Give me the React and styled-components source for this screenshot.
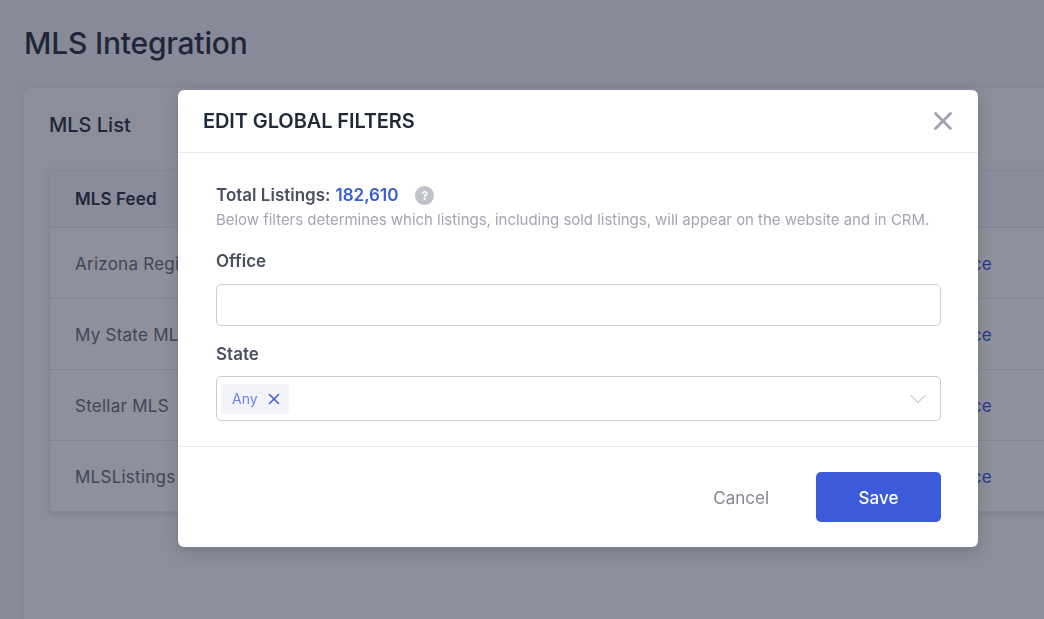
import React from 'react';
import styled, { createGlobalStyle } from 'styled-components';
import { X, ChevronDown } from 'lucide-react';

const GlobalStyle = createGlobalStyle`
	html, body {
		margin: 0;
		height: 100%;
		overflow: hidden;
		background: #f4f5f8;
		font-family: Inter, 'Liberation Sans', sans-serif;
	}
	* {
		box-sizing: border-box;
	}
`;

const Page = styled.div`
	height: 619px;
	padding: 24px 0 0 24px;
	overflow: hidden;
`;

const PageTitle = styled.h1`
	margin: 0;
	height: 40px;
	font-size: 30px;
	line-height: 38px;
	font-weight: 500;
	letter-spacing: -0.2px;
	color: #2b3446;
`;

const Card = styled.section`
	margin-top: 24px;
	width: 1100px;
	height: 560px;
	padding: 0 0 0 25px;
	background: #fbfbfd;
	border-radius: 6px;
	box-shadow: 0 0 6px rgba(30, 35, 60, 0.08);
`;

const CardTitle = styled.h2`
	margin: 0;
	height: 82px;
	font-size: 20px;
	line-height: 74px;
	font-weight: 500;
	color: #2b3446;
`;

const Table = styled.div`
	width: 1100px;
	background: #ffffff;
	border: 1px solid #edeef2;
	box-shadow: 0 2px 6px rgba(30, 35, 60, 0.12);
`;

const HeaderRow = styled.div`
	height: 56px;
	padding-left: 25px;
	display: flex;
	align-items: center;
	font-size: 17px;
	font-weight: 600;
	letter-spacing: 0.1px;
	color: #2b3446;
	background: #f8f9fb;
`;

const Row = styled.div`
	height: 71px;
	padding: 1px 156px 0 25px;
	display: flex;
	align-items: center;
	justify-content: space-between;
	font-size: 17px;
	letter-spacing: 0.25px;
	color: #6b7280;
	border-top: 1px solid #e8e9ee;
`;

const RowLink = styled.a`
	color: #3b5bdb;
`;

const Overlay = styled.div`
	position: fixed;
	inset: 0;
	padding: 90px 0 0 178px;
	background: rgba(18, 22, 45, 0.48);
`;

const Modal = styled.div`
	width: 800px;
	height: 457px;
	display: flex;
	flex-direction: column;
	background: #ffffff;
	border-radius: 6px;
	box-shadow: 0 4px 14px rgba(20, 24, 45, 0.2);
`;

const ModalHeader = styled.header`
	height: 63px;
	flex: none;
	padding: 0 25px;
	display: flex;
	align-items: center;
	justify-content: space-between;
	border-bottom: 1px solid #e9eaee;
`;

const ModalTitle = styled.h3`
	margin: 0;
	font-size: 20px;
	font-weight: 600;
	letter-spacing: -0.1px;
	color: #1f2937;
`;

const CloseButton = styled.button`
	width: 30px;
	height: 30px;
	margin-right: -5px;
	padding: 0;
	display: flex;
	align-items: center;
	justify-content: center;
	border: 0;
	background: none;
	color: #a0a2ad;
`;

const ModalBody = styled.div`
	flex: 1;
	padding: 31px 37px 0 38px;
`;

const TotalLine = styled.div`
	height: 22px;
	display: flex;
	align-items: center;
	font-size: 17px;
	font-weight: 600;
	color: #4b5060;
`;

const TotalValue = styled.span`
	margin-left: 5px;
	color: #3b5bdb;
`;

const HelpBadge = styled.span`
	width: 19px;
	height: 19px;
	margin-left: 17px;
	border-radius: 50%;
	display: flex;
	align-items: center;
	justify-content: center;
	font-size: 12px;
	font-weight: 700;
	color: #ffffff;
	background: #c0c2cc;
`;

const Hint = styled.p`
	margin: 4px 0 0;
	font-size: 15px;
	line-height: 20px;
	letter-spacing: -0.03px;
	color: #a3a5b1;
`;

const FieldLabel = styled.label`
	display: block;
	margin: ${(props) => props.$top}px 0 0;
	height: 24px;
	font-size: 17px;
	line-height: 24px;
	font-weight: 600;
	color: #4b5060;
`;

const TextInput = styled.input`
	display: block;
	width: 100%;
	height: 42px;
	margin-top: 11px;
	border: 1px solid #cdced6;
	border-radius: 5px;
	outline: none;
	background: #ffffff;
`;

const SelectBox = styled.div`
	height: 45px;
	margin-top: 10px;
	padding: 0 8px 0 4px;
	display: flex;
	align-items: center;
	justify-content: space-between;
	border: 1px solid #cdced6;
	border-radius: 5px;
`;

const Tag = styled.span`
	height: 30px;
	padding: 0 6px 0 11px;
	display: flex;
	align-items: center;
	gap: 7px;
	font-size: 14px;
	color: #6d84e3;
	background: #f3f4fa;
	border-radius: 3px;
`;

const TagIcon = styled(X)`
	color: #3b5bdb;
`;

const Chevron = styled(ChevronDown)`
	color: #cfd0d8;
`;

const ModalFooter = styled.footer`
	height: 101px;
	flex: none;
	padding: 25px 37px 0 0;
	display: flex;
	justify-content: flex-end;
	gap: 47px;
	border-top: 1px solid #e9eaee;
`;

const CancelButton = styled.button`
	height: 50px;
	padding: 2px 0 0;
	border: 0;
	background: none;
	font: inherit;
	font-size: 17px;
	color: #84868f;
`;

const SaveButton = styled.button`
	width: 125px;
	height: 50px;
	padding: 2px 0 0;
	border: 0;
	border-radius: 5px;
	font: inherit;
	font-size: 17px;
	font-weight: 500;
	color: #ffffff;
	background: #3b5bdb;
`;

const feeds = ['Arizona Regional MLS', 'My State MLS', 'Stellar MLS', 'MLSListings'];

const App = () => {
	return (
		<>
			<GlobalStyle />
			<Page>
				<PageTitle>MLS Integration</PageTitle>
				<Card>
					<CardTitle>MLS List</CardTitle>
					<Table>
						<HeaderRow>MLS Feed</HeaderRow>
						{feeds.map((feed) => (
							<Row key={feed}>
								<span>{feed}</span>
								<RowLink>Compliance</RowLink>
							</Row>
						))}
					</Table>
				</Card>
			</Page>
			<Overlay>
				<Modal>
					<ModalHeader>
						<ModalTitle>EDIT GLOBAL FILTERS</ModalTitle>
						<CloseButton>
							<X size={30} strokeWidth={2.2} />
						</CloseButton>
					</ModalHeader>
					<ModalBody>
						<TotalLine>
							Total Listings:
							<TotalValue>182,610</TotalValue>
							<HelpBadge>?</HelpBadge>
						</TotalLine>
						<Hint>
							Below filters determines which listings, including sold listings, will
							appear on the website and in CRM.
						</Hint>
						<FieldLabel $top={19}>Office</FieldLabel>
						<TextInput />
						<FieldLabel $top={16}>State</FieldLabel>
						<SelectBox>
							<Tag>
								Any
								<TagIcon size={18} strokeWidth={2} />
							</Tag>
							<Chevron size={28} strokeWidth={1} />
						</SelectBox>
					</ModalBody>
					<ModalFooter>
						<CancelButton>Cancel</CancelButton>
						<SaveButton>Save</SaveButton>
					</ModalFooter>
				</Modal>
			</Overlay>
		</>
	);
};

export default App;
